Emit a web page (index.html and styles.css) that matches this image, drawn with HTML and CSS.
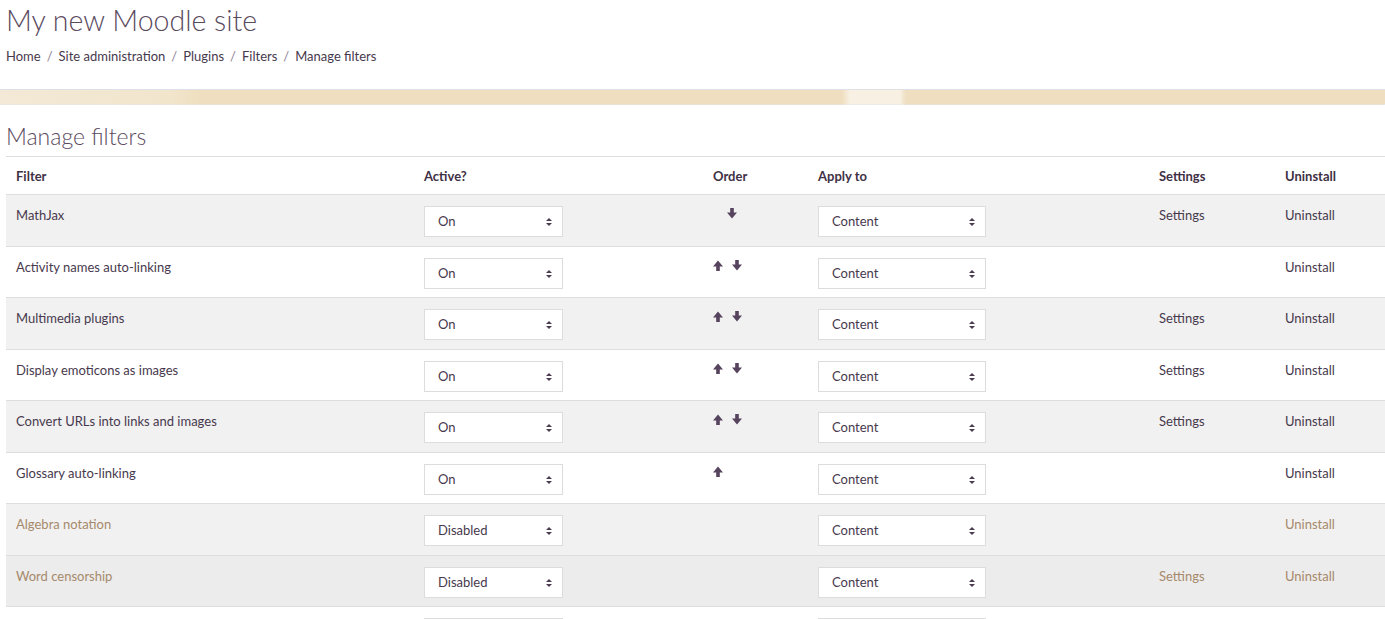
FILE: index.html
```html
<!DOCTYPE html>
<html lang="en">
<head>
<meta charset="utf-8">
<title>Manage filters</title>
<link rel="stylesheet" href="styles.css">
</head>
<body>
<header class="page-header">
  <h1 class="site-title">My new Moodle site</h1>
  <nav class="breadcrumb"><a href="#">Home</a><span class="sep">/</span><a href="#">Site administration</a><span class="sep">/</span><a href="#">Plugins</a><span class="sep">/</span><a href="#">Filters</a><span class="sep">/</span><a href="#">Manage filters</a></nav>
</header>
<div class="band"></div>
<main class="content">
  <h2 class="page-title">Manage filters</h2>
  <table class="filters">
    <colgroup>
      <col class="c-filter"><col class="c-active"><col class="c-order"><col class="c-apply"><col class="c-settings"><col class="c-uninstall">
    </colgroup>
    <thead>
      <tr><th>Filter</th><th>Active?</th><th>Order</th><th>Apply to</th><th>Settings</th><th>Uninstall</th></tr>
    </thead>
    <tbody>
      <tr class="odd">
        <td>MathJax</td>
        <td><div class="select w-active">On<span class="caret"></span></div></td>
        <td><span class="spacer"></span><svg class="arr" viewBox="0 0 10 11"><polygon points="3.2,0 6.8,0 6.8,4.6 10,4.6 5,10.6 0,4.6 3.2,4.6"/></svg></td>
        <td><div class="select w-apply">Content<span class="caret"></span></div></td>
        <td><a href="#">Settings</a></td>
        <td><a href="#">Uninstall</a></td>
      </tr>
      <tr>
        <td>Activity names auto-linking</td>
        <td><div class="select w-active">On<span class="caret"></span></div></td>
        <td><svg class="arr" viewBox="0 0 10 11"><polygon points="3.2,11 6.8,11 6.8,6.4 10,6.4 5,0.4 0,6.4 3.2,6.4"/></svg><svg class="arr" viewBox="0 0 10 11"><polygon points="3.2,0 6.8,0 6.8,4.6 10,4.6 5,10.6 0,4.6 3.2,4.6"/></svg></td>
        <td><div class="select w-apply">Content<span class="caret"></span></div></td>
        <td></td>
        <td><a href="#">Uninstall</a></td>
      </tr>
      <tr class="odd">
        <td>Multimedia plugins</td>
        <td><div class="select w-active">On<span class="caret"></span></div></td>
        <td><svg class="arr" viewBox="0 0 10 11"><polygon points="3.2,11 6.8,11 6.8,6.4 10,6.4 5,0.4 0,6.4 3.2,6.4"/></svg><svg class="arr" viewBox="0 0 10 11"><polygon points="3.2,0 6.8,0 6.8,4.6 10,4.6 5,10.6 0,4.6 3.2,4.6"/></svg></td>
        <td><div class="select w-apply">Content<span class="caret"></span></div></td>
        <td><a href="#">Settings</a></td>
        <td><a href="#">Uninstall</a></td>
      </tr>
      <tr>
        <td>Display emoticons as images</td>
        <td><div class="select w-active">On<span class="caret"></span></div></td>
        <td><svg class="arr" viewBox="0 0 10 11"><polygon points="3.2,11 6.8,11 6.8,6.4 10,6.4 5,0.4 0,6.4 3.2,6.4"/></svg><svg class="arr" viewBox="0 0 10 11"><polygon points="3.2,0 6.8,0 6.8,4.6 10,4.6 5,10.6 0,4.6 3.2,4.6"/></svg></td>
        <td><div class="select w-apply">Content<span class="caret"></span></div></td>
        <td><a href="#">Settings</a></td>
        <td><a href="#">Uninstall</a></td>
      </tr>
      <tr class="odd">
        <td>Convert URLs into links and images</td>
        <td><div class="select w-active">On<span class="caret"></span></div></td>
        <td><svg class="arr" viewBox="0 0 10 11"><polygon points="3.2,11 6.8,11 6.8,6.4 10,6.4 5,0.4 0,6.4 3.2,6.4"/></svg><svg class="arr" viewBox="0 0 10 11"><polygon points="3.2,0 6.8,0 6.8,4.6 10,4.6 5,10.6 0,4.6 3.2,4.6"/></svg></td>
        <td><div class="select w-apply">Content<span class="caret"></span></div></td>
        <td><a href="#">Settings</a></td>
        <td><a href="#">Uninstall</a></td>
      </tr>
      <tr>
        <td>Glossary auto-linking</td>
        <td><div class="select w-active">On<span class="caret"></span></div></td>
        <td><svg class="arr" viewBox="0 0 10 11"><polygon points="3.2,11 6.8,11 6.8,6.4 10,6.4 5,0.4 0,6.4 3.2,6.4"/></svg></td>
        <td><div class="select w-apply">Content<span class="caret"></span></div></td>
        <td></td>
        <td><a href="#">Uninstall</a></td>
      </tr>
      <tr class="odd dimmed">
        <td>Algebra notation</td>
        <td><div class="select w-active">Disabled<span class="caret"></span></div></td>
        <td></td>
        <td><div class="select w-apply">Content<span class="caret"></span></div></td>
        <td></td>
        <td><a href="#">Uninstall</a></td>
      </tr>
      <tr class="hover dimmed">
        <td>Word censorship</td>
        <td><div class="select w-active">Disabled<span class="caret"></span></div></td>
        <td></td>
        <td><div class="select w-apply">Content<span class="caret"></span></div></td>
        <td><a href="#">Settings</a></td>
        <td><a href="#">Uninstall</a></td>
      </tr>
      <tr class="dimmed">
        <td></td>
        <td><div class="select w-active"></div></td>
        <td></td>
        <td><div class="select w-apply"></div></td>
        <td></td>
        <td></td>
      </tr>
    </tbody>
  </table>
</main>
</body>
</html>
```
FILE: styles.css
```css
html, body {
  margin: 0;
  padding: 0;
  background: #fff;
  overflow: hidden;
}
body {
  font-family: "Lato", "Open Sans", sans-serif;
  font-size: 13px;
  color: #47394d;
}
a {
  color: #47394d;
  text-decoration: none;
}
.page-header {
  padding: 0 6px;
}
.site-title {
  margin: 0;
  padding-top: 2px;
  font-weight: 300;
  font-size: 28.5px;
  line-height: 36px;
  color: #5a4a5e;
}
.breadcrumb {
  margin-top: 8px;
  line-height: 20px;
  height: 20px;
}
.breadcrumb .sep {
  color: #8a8090;
  padding: 0 6px;
}
.band {
  margin-top: 23px;
  height: 14px;
  border-top: 1px solid #dde0e8;
  border-bottom: 1px dotted #e4e6ee;
  background:
    linear-gradient(90deg, rgba(255,255,255,0) 0, rgba(255,255,255,0) 842px, rgba(255,255,255,0.55) 850px, rgba(255,255,255,0.55) 900px, rgba(255,255,255,0) 906px),
    linear-gradient(90deg, #f3e9d6 0, #f1e5cc 170px, #efdfc0 200px, #efdfc0 100%);
}
.content {
  padding: 0 0 0 6px;
}
.page-title {
  margin: 0;
  padding-top: 16px;
  font-weight: 300;
  font-size: 23px;
  line-height: 30px;
  height: 35px;
  color: #5a4a5e;
}
.filters {
  width: 1379px;
  border-collapse: collapse;
  table-layout: fixed;
  border-top: 1px solid #dedede;
}
.c-filter { width: 408px; }
.c-active { width: 289px; }
.c-order { width: 105px; }
.c-apply { width: 341px; }
.c-settings { width: 126px; }
.c-uninstall { width: 110px; }
.filters th {
  text-align: left;
  font-weight: 700;
  padding: 0 10px;
  height: 37px;
  vertical-align: middle;
  color: #3f3145;
  border-bottom: 1px solid #dedede;
}
.filters td {
  height: 51.5px;
  padding: 10px 10px 0;
  vertical-align: top;
  line-height: 20px;
  border-bottom: 1px solid #dedede;
  box-sizing: border-box;
}
.filters tr.odd td { background: #f1f1f1; }
.filters tr.hover td { background: #ececec; }
.filters tr.dimmed td,
.filters tr.dimmed a { color: #a6896b; }
.filters tr.dimmed .select { color: #47394d; }
.select {
  position: relative;
  box-sizing: border-box;
  margin-top: 1px;
  height: 31px;
  line-height: 29px;
  padding-left: 13px;
  background: #fff;
  border: 1px solid #dcdcdc;
  color: #47394d;
}
.w-active { width: 139px; }
.w-apply { width: 168px; }
.caret {
  position: absolute;
  right: 13px;
  top: 11px;
  width: 0;
  height: 0;
}
.caret::before, .caret::after {
  content: "";
  position: absolute;
  left: -3px;
  border-left: 3px solid transparent;
  border-right: 3px solid transparent;
}
.caret::before {
  top: 0;
  border-bottom: 3px solid #4a3d50;
}
.caret::after {
  top: 5px;
  border-top: 3px solid #4a3d50;
}
.arr {
  display: inline-block;
  width: 10px;
  height: 11px;
  vertical-align: middle;
  fill: #56435d;
  margin-top: -6px;
  margin-right: 9px;
}
.spacer {
  display: inline-block;
  width: 14px;
}
```
